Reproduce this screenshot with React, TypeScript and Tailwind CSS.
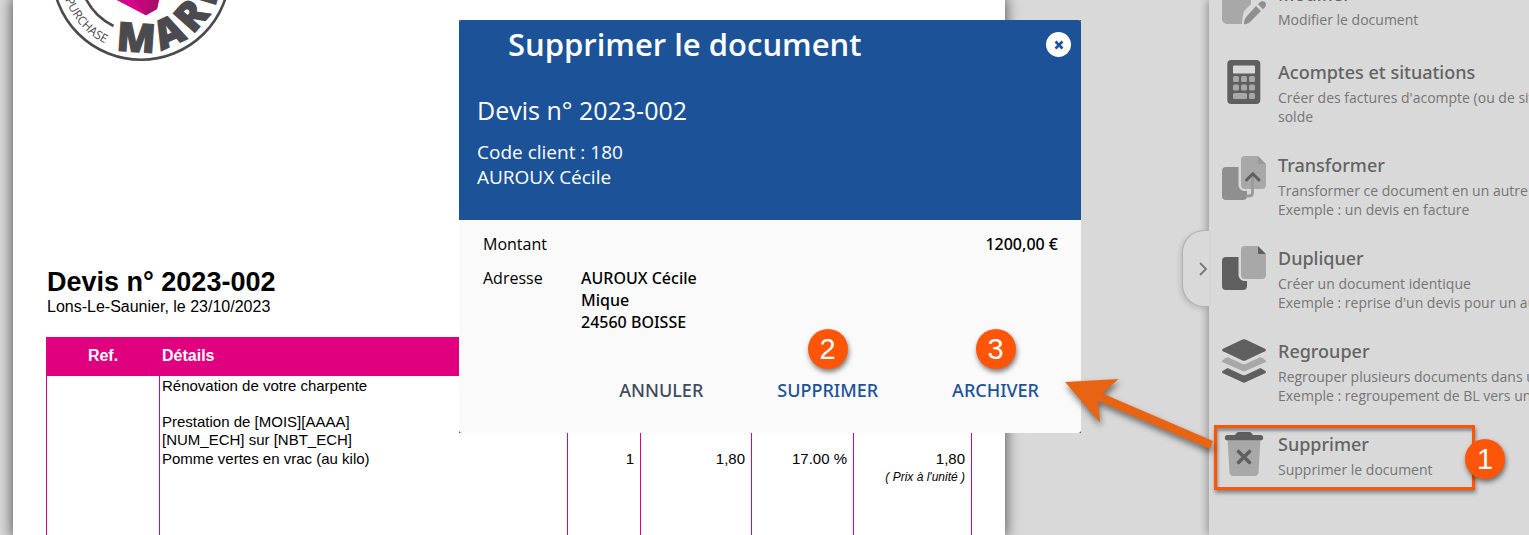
import type { ReactNode } from "react";

type Action = { title: string; lines: string[]; icon: ReactNode; highlighted?: boolean };

const DARK = "#5f5f5f";
const MID = "#8f8f8f";
const LIGHT = "#a8a8a8";

const EditIcon = () => (
  <svg viewBox="0 0 44 50" className="h-[50px] w-11" aria-hidden="true">
    <path fill={LIGHT} d="M4 0h25v22l-6 6c-2 3-3 8-3 14H5a5 5 0 0 1-5-5V4z" />
    <path fill={MID} d="M34 24l5 5L28 40c-2 1.800-4 2.300-6 2.300 0-3 .5-5.500 2.500-7.800zM36 22.200l1.500-1.500c2-2 4.500-1.500 5.600-.4 1.300 1.500 1.300 3.500-.4 5.300L41 27.200z" />
  </svg>
);

const CalculatorIcon = () => (
  <svg viewBox="0 0 44 44" className="h-11 w-11" aria-hidden="true">
    <rect x="5.300" y="0" width="33" height="44" rx="4" fill={DARK} />
    <rect x="11" y="5.500" width="22" height="8" rx="0.800" fill="#d9d9d9" />
    <g fill={LIGHT}>
      <rect x="11" y="16" width="6" height="6" rx="1.500" />
      <rect x="19" y="16" width="6" height="6" rx="1.500" />
      <rect x="27" y="16" width="6" height="6" rx="1.500" />
      <rect x="11" y="24.500" width="6" height="6" rx="1.500" />
      <rect x="19" y="24.500" width="6" height="6" rx="1.500" />
      <rect x="27" y="24.500" width="6" height="6" rx="1.500" />
      <rect x="11" y="33" width="14" height="6" rx="1.500" />
      <rect x="27" y="33" width="6" height="6" rx="1.500" />
    </g>
  </svg>
);

const TransformIcon = () => (
  <svg viewBox="0 -3 44 50" className="h-[50px] w-11" aria-hidden="true">
    <path fill={MID} d="M4 11h12.500v17.500c0 4 3 6.500 6.500 6.500h2v5a4 4 0 0 1-4 4H4a4 4 0 0 1-4-4V15a4 4 0 0 1 4-4z" />
    <path fill={LIGHT} d="M23 0h13v8h8v21a4 4 0 0 1-4 4H23a4 4 0 0 1-4-4V4a4 4 0 0 1 4-4z" />
    <path fill="#999" d="M36 0l8 8h-8z" />
    <path fill="none" stroke="#999" strokeWidth="2.800" d="M30.500 20v16.500c0 2.500-1 3.500-3 3.500h-4" />
    <path fill="none" stroke={DARK} strokeWidth="3" strokeLinecap="round" strokeLinejoin="round" d="M24.500 24l6.300-6.300 6.200 6.300" />
  </svg>
);

const DuplicateIcon = () => (
  <svg viewBox="0 0 44 44" className="h-11 w-11" aria-hidden="true">
    <path fill={DARK} d="M4 11h12.500v17.500c0 4 3 6.500 6.500 6.500h2v5a4 4 0 0 1-4 4H4a4 4 0 0 1-4-4V15a4 4 0 0 1 4-4z" />
    <path fill={LIGHT} d="M23 0h13v8h8v21a4 4 0 0 1-4 4H23a4 4 0 0 1-4-4V4a4 4 0 0 1 4-4z" />
    <path fill={DARK} d="M36 0l8 8h-8z" />
  </svg>
);

const LayersIcon = () => (
  <svg viewBox="0 0 44 44" className="h-11 w-11" aria-hidden="true">
    <path fill={DARK} d="M20.500.500Q22-.200 23.500.500L43 9.700q2 1.300 0 2.600L23.500 21.500q-1.500.700-3 0L1 12.300q-2-1.300 0-2.600z" />
    <path fill={LIGHT} d="M1 20.700L5.500 18l15 7q1.500.700 3 0l15-7 4.500 2.700q2 1.200 0 2.500L23.500 32q-1.500.700-3 0L1 23.200q-2-1.300 0-2.500z" />
    <path fill={DARK} d="M1 31.700L5.500 29l15 7q1.500.700 3 0l15-7 4.500 2.700q2 1.200 0 2.500L23.500 43.300q-1.500.700-3 0L1 34.200q-2-1.300 0-2.500z" />
  </svg>
);

const TrashIcon = () => (
  <svg viewBox="0 0 44 44" className="h-11 w-11" aria-hidden="true">
    <path fill={LIGHT} d="M5.500 7h33l-2 33.200a4 4 0 0 1-4 3.800h-21a4 4 0 0 1-4-3.800z" />
    <path fill={DARK} d="M5.500 3H13l1.300-1.700A3 3 0 0 1 17 0h10a3 3 0 0 1 2.700 1.300L31 3h7.500a2.600 2.600 0 0 1 0 5.300h-33a2.600 2.600 0 0 1 0-5.300z" />
    <path stroke={DARK} strokeWidth="3.600" strokeLinecap="round" d="M16.500 19.500l11 11M27.500 19.500l-11 11" />
  </svg>
);

const actions: Action[] = [
  { title: "Modifier", lines: ["Modifier le document"], icon: <EditIcon /> },
  {
    title: "Acomptes et situations",
    lines: ["Créer des factures d'acompte (ou de situation) et de", "solde"],
    icon: <CalculatorIcon />,
  },
  {
    title: "Transformer",
    lines: ["Transformer ce document en un autre type", "Exemple : un devis en facture"],
    icon: <TransformIcon />,
  },
  {
    title: "Dupliquer",
    lines: ["Créer un document identique", "Exemple : reprise d'un devis pour un autre client"],
    icon: <DuplicateIcon />,
  },
  {
    title: "Regrouper",
    lines: ["Regrouper plusieurs documents dans un seul", "Exemple : regroupement de BL vers une facture"],
    icon: <LayersIcon />,
  },
  { title: "Supprimer", lines: ["Supprimer le document"], icon: <TrashIcon />, highlighted: true },
];

function Step({ n, className }: { n: number; className: string }) {
  return (
    <span
      className={`absolute flex size-10 items-center justify-center rounded-full bg-[#ff5509] font-['Liberation_Sans',sans-serif] text-[29px] leading-none font-normal text-white shadow-[1px_3px_5px_rgba(0,0,0,0.5)] ${className}`}
    >
      {n}
    </span>
  );
}

function Logo() {
  return (
    <svg viewBox="50 0 182 66" className="ml-[37px] h-[66px] w-[182px]" role="img" aria-label="Purchase Mark">
      <defs>
        <path id="ring" d="M60-29a81 81 0 0 0 162 0" />
      </defs>
      <circle cx="141" cy="-29" r="88.700" fill="none" stroke="#4b4a4e" strokeWidth="2.600" />
      <path d="M84.500-4A62 62 0 0 0 113.500 26" fill="none" stroke="#4b4a4e" strokeWidth="2.600" />
      <path d="M117 0h42l-2 9-11 6.300z" fill="#c9087d" />
      <path d="M117 0h17l12 15.300z" fill="#d5058a" />
      <path d="M134 0h15l-3 15.300z" fill="#c20679" />
      <path d="M149 0h10l-2 9-11 6.300z" fill="#ad0d6c" />
      <text fill="#4b4a4e" className="font-['Liberation_Sans_Narrow','Open_Sans',sans-serif] text-[12px]">
        <textPath href="#ring" startOffset="29">PURCHASE</textPath>
      </text>
      <text
        fill="#4b4a4e"
        stroke="#4b4a4e"
        strokeWidth="1.200"
        className="font-['Open_Sans',sans-serif] text-[40px] font-extrabold"
      >
        <textPath href="#ring" startOffset="102">M</textPath>
        <textPath href="#ring" startOffset="147">A</textPath>
        <textPath href="#ring" startOffset="182">R</textPath>
        <textPath href="#ring" startOffset="217">K</textPath>
      </text>
    </svg>
  );
}

const cell = "border-x border-[#e0007f] px-[6px] text-right align-top";
const headCell = "border-x border-[#e0007f] px-[2px] pb-[2px]";

function Quote() {
  return (
    <section className="h-full w-[992px] shrink-0 bg-white font-['Liberation_Sans',sans-serif] text-black shadow-[0_0_12px_2px_rgba(0,0,0,0.55)]">
      <Logo />
      <div className="px-[33px] pt-[200px]">
        <h1 className="pl-px text-[27px] leading-8 font-bold">Devis n° 2023-002</h1>
        <p className="pl-px text-base leading-[18px]">Lons-Le-Saunier, le 23/10/2023</p>
        <table className="mt-[21px] w-[926px] table-fixed border-collapse text-[15px] leading-[18px]">
          <colgroup>
            <col className="w-[113px]" />
            <col className="w-[408px]" />
            <col className="w-[73px]" />
            <col className="w-[111px]" />
            <col className="w-[102px]" />
            <col className="w-[118px]" />
          </colgroup>
          <thead>
            <tr className="h-[39px] bg-[#e0007f] text-base text-white">
              <th className={headCell}>Ref.</th>
              <th className={`${headCell} text-left`}>Détails</th>
              <th className={headCell}>Qté</th>
              <th className={headCell}>P.U.</th>
              <th className={headCell}>TVA</th>
              <th className={headCell}>Total</th>
            </tr>
          </thead>
          <tbody>
            <tr className="h-[74px]">
              <td className={cell} />
              <td className="px-[2px] pt-px align-top">
                <p>Rénovation de votre charpente</p>
                <p className="mt-[18px]">Prestation de [MOIS][AAAA]</p>
                <p>[NUM_ECH] sur [NBT_ECH]</p>
              </td>
              <td className={cell} />
              <td className={cell} />
              <td className={cell} />
              <td className={cell} />
            </tr>
            <tr className="h-[120px]">
              <td className={cell} />
              <td className="px-[2px] align-top">Pomme vertes en vrac (au kilo)</td>
              <td className={cell}>1</td>
              <td className={cell}>1,80</td>
              <td className={cell}>17.00 %</td>
              <td className={cell}>
                1,80
                <p className="text-[12px] italic">( Prix à l'unité )</p>
              </td>
            </tr>
          </tbody>
        </table>
      </div>
    </section>
  );
}

function DeleteDialog() {
  return (
    <div className="absolute top-5 left-[459px] z-10 w-[622px] bg-[#4a4a4a] font-['Open_Sans',sans-serif]">
      <div role="dialog" aria-labelledby="dialog-title" className="overflow-hidden rounded-[3px] bg-[#fafafa]">
        <header className="h-[200px] bg-[#1c5298] px-[18px] text-white">
          <div className="flex items-start justify-between">
            <h2 id="dialog-title" className="pl-[31px] text-[31px] leading-[48px] font-semibold">
              Supprimer le document
            </h2>
            <button
              type="button"
              aria-label="Fermer"
              className="-mr-2 mt-3 flex size-[25px] items-center justify-center rounded-full bg-white"
            >
              <svg viewBox="0 0 10 10" className="size-[10px]" aria-hidden="true">
                <path d="M1.500 1.500l7 7M8.500 1.500l-7 7" stroke="#1c5298" strokeWidth="2.600" />
              </svg>
            </button>
          </div>
          <p className="mt-6 text-[25px] leading-9">Devis n° 2023-002</p>
          <p className="mt-3 text-[19px] leading-[25px]">Code client : 180</p>
          <p className="text-[19px] leading-[25px]">AUROUX Cécile</p>
        </header>
        <dl className="px-[23px] pt-[13px] text-base leading-[22px] text-black">
          <div className="flex justify-between pl-px">
            <dt>Montant</dt>
            <dd className="font-['Noto_Sans',sans-serif] font-medium">1200,00 €</dd>
          </div>
          <div className="mt-3 flex pl-px">
            <dt className="w-[98px]">Adresse</dt>
            <dd className="font-['Noto_Sans',sans-serif] font-medium">
              AUROUX Cécile
              <br />
              Mique
              <br />
              24560 BOISSE
            </dd>
          </div>
        </dl>
        <footer className="mt-[42px] flex justify-end gap-[74px] pr-[42px] pb-7 font-['Noto_Sans',sans-serif] text-[18px] leading-[30px] font-medium text-[#1c5298]">
          <button type="button" className="text-[#3f4a5c]">ANNULER</button>
          <button type="button" className="relative">
            <Step n={2} className="-top-[46px] left-1/2 -translate-x-1/2" />
            SUPPRIMER
          </button>
          <button type="button" className="relative">
            <Step n={3} className="-top-[46px] left-1/2 -translate-x-1/2" />
            ARCHIVER
          </button>
        </footer>
      </div>
    </div>
  );
}

function ActionPanel() {
  return (
    <aside className="relative z-20 h-full w-80 shrink-0 bg-[#d9d9d9] font-['Open_Sans',sans-serif] shadow-[-2px_0_8px_rgba(0,0,0,0.3)]">
      <button
        type="button"
        aria-label="Replier le panneau"
        className="absolute top-[230px] -left-[27px] flex h-[77px] w-[27px] items-center justify-end rounded-l-[22px] border border-r-0 border-[#b0b0b0] bg-[#d9d9d9] pr-[2px] shadow-[-2px_2px_5px_rgba(0,0,0,0.12)]"
      >
        <svg viewBox="0 0 8 14" className="h-[14px] w-2" aria-hidden="true">
          <path d="M1 1l6 6-6 6" fill="none" stroke="#777" strokeWidth="1.800" />
        </svg>
      </button>
      <ul className="-mt-[18px] pl-[13px]">
        {actions.map((action) => (
          <li key={action.title} className="relative min-h-[78px] pb-[27px]">
            <a href="#" className="flex gap-3">
              <span className="h-11 w-11 shrink-0">{action.icon}</span>
              <span className="flex flex-col whitespace-nowrap">
                <span className="font-['Noto_Sans',sans-serif] text-[18px] leading-[25px] font-medium text-[#636363]">
                  {action.title}
                </span>
                <span className="mt-[3px] flex flex-col text-[14px] leading-[19px] text-[#757575]">
                  {action.lines.map((line) => (
                    <span key={line}>{line}</span>
                  ))}
                </span>
              </span>
            </a>
            {action.highlighted && (
              <div className="pointer-events-none absolute -top-[7px] -left-2 h-[65px] w-[261px] border-3 border-[#ff5509] shadow-[1px_3px_4px_rgba(0,0,0,0.4),inset_1px_3px_3px_rgba(0,0,0,0.35)]">
                <Step n={1} className="top-[11px] -right-[33px]" />
              </div>
            )}
          </li>
        ))}
      </ul>
      <svg
        viewBox="1060 370 160 90"
        className="pointer-events-none absolute top-[370px] -left-[149px] h-[90px] w-40 drop-shadow-[1px_4px_3px_rgba(0,0,0,0.5)]"
        aria-hidden="true"
      >
        <path d="M1065 382l53.500-3-16 14.500 110.500 47.500-3 8-112-48 2 21.500z" fill="#e86412" />
      </svg>
    </aside>
  );
}

export default function App() {
  return (
    <div className="relative flex h-screen overflow-hidden bg-[#d9d9d9]">
      <main className="min-w-0 flex-1 pl-[13px]">
        <Quote />
      </main>
      <DeleteDialog />
      <ActionPanel />
    </div>
  );
}
